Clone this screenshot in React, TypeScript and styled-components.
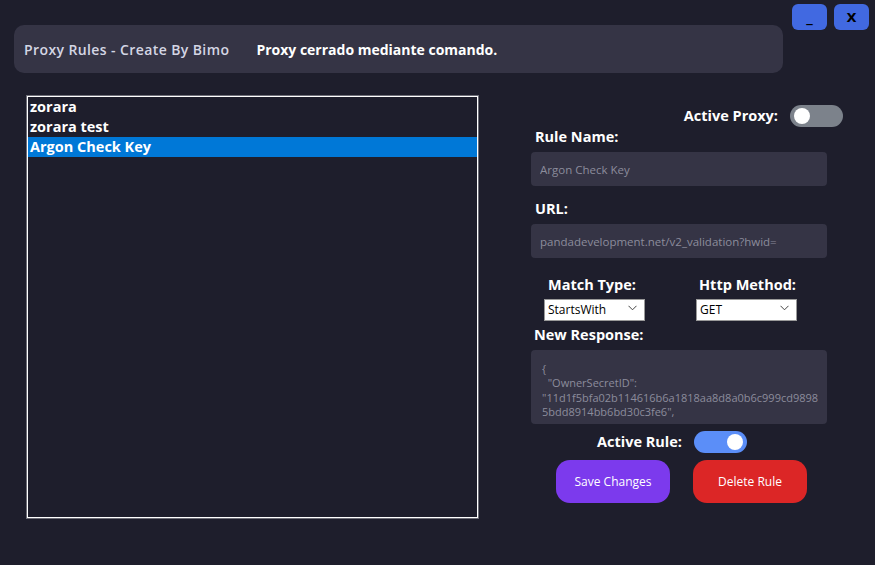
import React from "react";
import styled, { createGlobalStyle } from "styled-components";

const Global = createGlobalStyle`
  html, body { margin: 0; padding: 0; background: #1e1e2c; }
  body { font-family: "Open Sans", "Noto Sans", sans-serif; }
  * { box-sizing: border-box; }
`;

const Window = styled.div`
  width: 875px;
  height: 565px;
  background: #1e1e2c;
  display: flex;
  flex-direction: column;
  overflow: hidden;
`;

const TopRow = styled.div`
  display: flex;
  align-items: flex-start;
  padding: 4px 6px 0 14px;
`;

const Header = styled.div`
  margin-top: 21px;
  width: 769px;
  height: 48px;
  background: #353445;
  border-radius: 10px;
  display: flex;
  align-items: center;
  padding-left: 10px;
  gap: 27px;
`;

const Title = styled.span`
  color: #d4d6e4;
  font-size: 14px;
  font-weight: 600;
  letter-spacing: 0.4px;
`;

const Status = styled.span`
  color: #ffffff;
  font-size: 14px;
  font-weight: 700;
`;

const WinControls = styled.div`
  margin-left: auto;
  display: flex;
  gap: 7px;
`;

const WinButton = styled.button`
  width: 35px;
  height: 26px;
  border: none;
  border-radius: 6px;
  background: #4169e1;
  color: #000;
  font-family: "DejaVu Sans", sans-serif;
  font-weight: 700;
  font-size: 13px;
  padding: 0;
  display: flex;
  align-items: center;
  justify-content: center;
`;

const Body = styled.div`
  display: flex;
  padding: 22px 0 0 26px;
`;

const ListBox = styled.ul`
  list-style: none;
  margin: 0;
  padding: 1px;
  width: 453px;
  height: 424px;
  border: 1px solid #6e6e78;
  outline: 1px solid #ffffff;
  outline-offset: -2px;
  background: #1e1e2c;
`;

const ListItem = styled.li<{ $selected?: boolean }>`
  height: 20px;
  line-height: 20px;
  padding-left: 2px;
  color: #ffffff;
  font-size: 14.5px;
  font-weight: 700;
  background: ${(p) => (p.$selected ? "#0078d7" : "transparent")};
`;

const Side = styled.div`
  margin-left: 52px;
  width: 312px;
  display: flex;
  flex-direction: column;
`;

const ToggleRow = styled.div<{ $justify: string; $mt: number }>`
  display: flex;
  align-items: center;
  justify-content: ${(p) => p.$justify};
  gap: 12px;
  margin-top: ${(p) => p.$mt}px;
`;

const Label = styled.label<{ $mt?: number; $ml?: number }>`
  display: block;
  color: #ffffff;
  font-size: 14.5px;
  font-weight: 700;
  line-height: 18px;
  margin-top: ${(p) => p.$mt ?? 0}px;
  margin-left: ${(p) => p.$ml ?? 0}px;
`;

const Switch = styled.span<{ $on?: boolean }>`
  position: relative;
  display: inline-block;
  width: 53px;
  height: 22px;
  border-radius: 11px;
  background: ${(p) => (p.$on ? "#5b8ef8" : "#7c828b")};
  &::after {
    content: "";
    position: absolute;
    top: 3px;
    ${(p) => (p.$on ? "right: 4px;" : "left: 4px;")}
    width: 16px;
    height: 16px;
    border-radius: 50%;
    background: #fff;
  }
`;

const TextInput = styled.input`
  width: 296px;
  height: 34px;
  margin-top: 6px;
  border: none;
  border-radius: 4px;
  background: #353445;
  color: #8c8c9c;
  font-family: "Open Sans", sans-serif;
  font-size: 11.5px;
  padding: 0 9px;
  outline: none;
`;

const SelectRow = styled.div`
  display: flex;
  margin-top: 18px;
  margin-left: 13px;
`;

const SelectGroup = styled.div<{ $w: number }>`
  width: ${(p) => p.$w}px;
  display: flex;
  flex-direction: column;
`;

const SelectBox = styled.div`
  position: relative;
  width: 101px;
  height: 22px;
  margin-top: 3px;
`;

const Select = styled.select`
  appearance: none;
  width: 100%;
  height: 100%;
  border: 1px solid #9a9a9a;
  background: #fff;
  color: #000;
  font-family: "Open Sans", sans-serif;
  font-size: 12px;
  padding: 0 0 0 3px;
  border-radius: 0;
  outline: none;
`;

const Chevron = styled.svg`
  position: absolute;
  right: 8px;
  top: 8px;
  pointer-events: none;
`;

const Response = styled.textarea`
  width: 296px;
  height: 74px;
  margin-top: 6px;
  border: none;
  border-radius: 4px;
  background: #353445;
  color: #8c8c9c;
  font-family: "Open Sans", sans-serif;
  font-size: 11px;
  line-height: 14.3px;
  padding: 12px 9px 0 11px;
  resize: none;
  overflow: hidden;
  white-space: pre;
  outline: none;
`;

const Actions = styled.div`
  display: flex;
  gap: 23px;
  margin-top: 7px;
  margin-left: 25px;
`;

const ActionButton = styled.button<{ $color: string }>`
  width: 114px;
  height: 43px;
  border: none;
  border-radius: 14px;
  background: ${(p) => p.$color};
  color: #fff;
  font-family: "Open Sans", sans-serif;
  font-size: 12px;
`;

function ChevronIcon() {
  return (
    <Chevron width="9" height="6" viewBox="0 0 9 6">
      <path d="M0.5 0.8 L4.5 4.8 L8.5 0.8" fill="none" stroke="#444" strokeWidth="1" />
    </Chevron>
  );
}

const responseText =
  '{\n  "OwnerSecretID":\n"11d1f5bfa02b114616b6a1818aa8d8a0b6c999cd9898\n5bdd8914bb6bd30c3fe6",';

export default function App() {
  return (
    <>
      <Global />
      <Window>
        <TopRow>
          <Header>
            <Title>Proxy Rules - Create By Bimo</Title>
            <Status>Proxy cerrado mediante comando.</Status>
          </Header>
          <WinControls>
            <WinButton>_</WinButton>
            <WinButton>X</WinButton>
          </WinControls>
        </TopRow>
        <Body>
          <ListBox>
            <ListItem>zorara</ListItem>
            <ListItem>zorara test</ListItem>
            <ListItem $selected>Argon Check Key</ListItem>
          </ListBox>
          <Side>
            <ToggleRow $justify="flex-end" $mt={10}>
              <Label>Active Proxy:</Label>
              <Switch />
            </ToggleRow>
            <Label $mt={1} $ml={4}>Rule Name:</Label>
            <TextInput defaultValue="Argon Check Key" />
            <Label $mt={14} $ml={4}>URL:</Label>
            <TextInput defaultValue="pandadevelopment.net/v2_validation?hwid=" />
            <SelectRow>
              <SelectGroup $w={152}>
                <Label $ml={4}>Match Type:</Label>
                <SelectBox>
                  <Select defaultValue="StartsWith">
                    <option>StartsWith</option>
                    <option>Equals</option>
                    <option>Contains</option>
                  </Select>
                  <ChevronIcon />
                </SelectBox>
              </SelectGroup>
              <SelectGroup $w={110}>
                <Label $ml={3}>Http Method:</Label>
                <SelectBox>
                  <Select defaultValue="GET">
                    <option>GET</option>
                    <option>POST</option>
                  </Select>
                  <ChevronIcon />
                </SelectBox>
              </SelectGroup>
            </SelectRow>
            <Label $mt={7} $ml={3}>New Response:</Label>
            <Response defaultValue={responseText} />
            <ToggleRow $justify="flex-start" $mt={7}>
              <Label $ml={66}>Active Rule:</Label>
              <Switch $on />
            </ToggleRow>
            <Actions>
              <ActionButton $color="#7c3aed">Save Changes</ActionButton>
              <ActionButton $color="#dc2626">Delete Rule</ActionButton>
            </Actions>
          </Side>
        </Body>
      </Window>
    </>
  );
}
